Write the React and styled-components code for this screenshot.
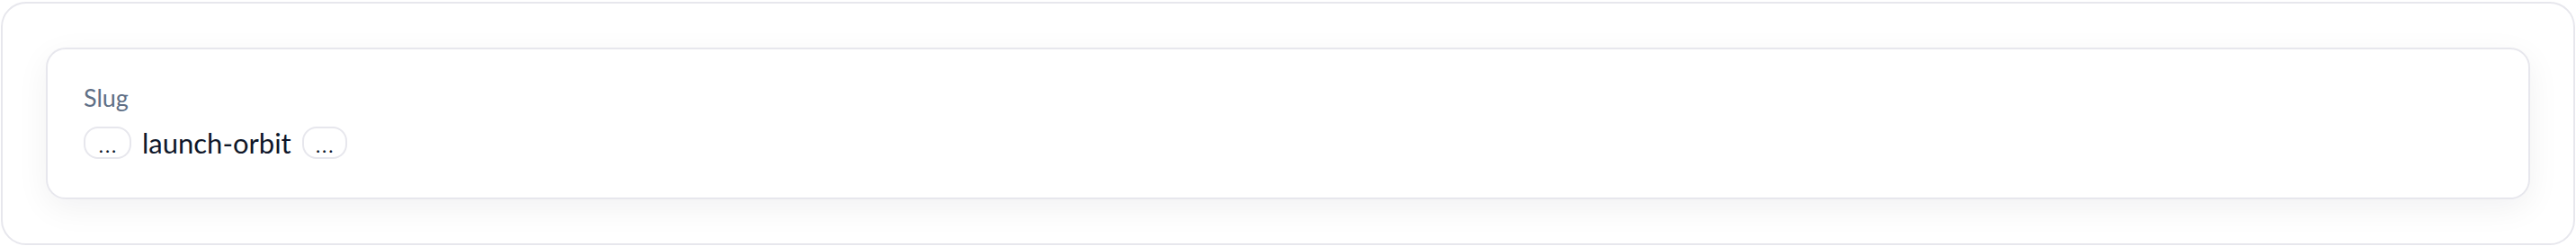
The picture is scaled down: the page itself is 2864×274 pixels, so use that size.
import React from "react";
import styled, { createGlobalStyle } from "styled-components";

const GlobalStyle = createGlobalStyle`
  html, body {
    margin: 0;
    padding: 0;
    background: #ffffff;
  }
  body {
    font-family: Lato, "Noto Sans", "Liberation Sans", sans-serif;
  }
`;

const Page = styled.div`
  padding: 2px 1px 1px 1px;
`;

const Frame = styled.div`
  box-sizing: border-box;
  height: 271px;
  border: 2px solid #e7e7ed;
  border-radius: 28px;
  background: #ffffff;
  padding: 49px 48px;
`;

const Card = styled.div`
  box-sizing: border-box;
  height: 169px;
  border: 2px solid #e7e7ed;
  border-radius: 22px;
  background: #ffffff;
  box-shadow: 0 10px 36px rgba(15, 23, 42, 0.06);
  padding: 36px 40px;
  display: flex;
  flex-direction: column;
  gap: 14px;
`;

const Label = styled.div`
  font-size: 27px;
  line-height: 36px;
  color: #5f6f86;
  font-weight: 400;
`;

const Row = styled.div`
  display: flex;
  align-items: center;
  gap: 12px;
`;

const Pill = styled.button`
  box-sizing: border-box;
  height: 36px;
  min-width: ${props => props.wide ? 53 : 50}px;
  padding: 6px 10px 0 12px;
  border: 2px solid #e7e7ed;
  border-radius: 16px;
  background: #ffffff;
  color: #0f172a;
  font-family: inherit;
  font-size: 22px;
  letter-spacing: 2px;
  line-height: 1;
  display: flex;
  align-items: center;
  justify-content: center;
`;

const Slug = styled.span`
  font-size: 31px;
  line-height: 36px;
  color: #0f172a;
`;

export default function App() {
  return (
    <>
      <GlobalStyle />
      <Page>
        <Frame>
          <Card>
            <Label>Slug</Label>
            <Row>
              <Pill wide>...</Pill>
              <Slug>launch-orbit</Slug>
              <Pill>...</Pill>
            </Row>
          </Card>
        </Frame>
      </Page>
    </>
  );
}
